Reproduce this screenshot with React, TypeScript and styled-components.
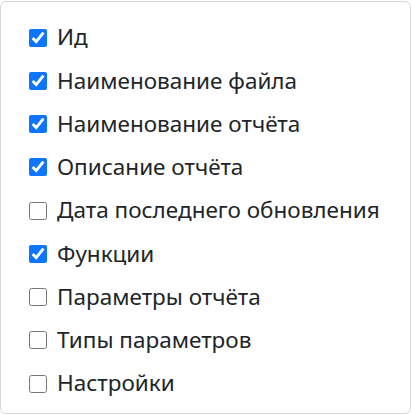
import React, { useState } from "react";
import styled, { createGlobalStyle } from "styled-components";

const GlobalStyle = createGlobalStyle`
        html, body {
                margin: 0;
                padding: 0;
                background: #ffffff;
        }
        body {
                font-family: "Noto Sans", "Open Sans", sans-serif;
                color: #212529;
        }
`;

interface Column {
        id: string;
        label: string;
        visible: boolean;
}

const initialColumns: Column[] = [
        { id: "id", label: "Ид", visible: true },
        { id: "fileName", label: "Наименование файла", visible: true },
        { id: "reportName", label: "Наименование отчёта", visible: true },
        { id: "reportDescription", label: "Описание отчёта", visible: true },
        { id: "lastUpdate", label: "Дата последнего обновления", visible: false },
        { id: "functions", label: "Функции", visible: true },
        { id: "reportParams", label: "Параметры отчёта", visible: false },
        { id: "paramTypes", label: "Типы параметров", visible: false },
        { id: "settings", label: "Настройки", visible: false },
];

const Menu = styled.div`
        box-sizing: border-box;
        margin-top: 1px;
        width: 411px;
        height: 413px;
        border: 1px solid #d6d6d6;
        border-radius: 6px;
        background: #ffffff;
        padding: 14px 0 6px 0;
        display: flex;
        flex-direction: column;
`;

const Item = styled.label`
        display: flex;
        align-items: center;
        gap: 10px;
        height: 43.25px;
        padding-left: 28px;
        font-size: 22.5px;
        line-height: 1;
        cursor: pointer;
        white-space: nowrap;
`;

const Check = styled.input`
        width: 18px;
        height: 18px;
        margin: 0;
        accent-color: #0d75ff;
        flex-shrink: 0;
`;

const App: React.FC = () => {
        const [columns, setColumns] = useState<Column[]>(initialColumns);

        const toggle = (id: string) => {
                setColumns((prev) =>
                        prev.map((c) => (c.id === id ? { ...c, visible: !c.visible } : c))
                );
        };

        return (
                <>
                        <GlobalStyle />
                        <Menu>
                                {columns.map((col) => (
                                        <Item key={col.id}>
                                                <Check
                                                        type="checkbox"
                                                        checked={col.visible}
                                                        onChange={() => toggle(col.id)}
                                                />
                                                {col.label}
                                        </Item>
                                ))}
                        </Menu>
                </>
        );
};

export default App;
